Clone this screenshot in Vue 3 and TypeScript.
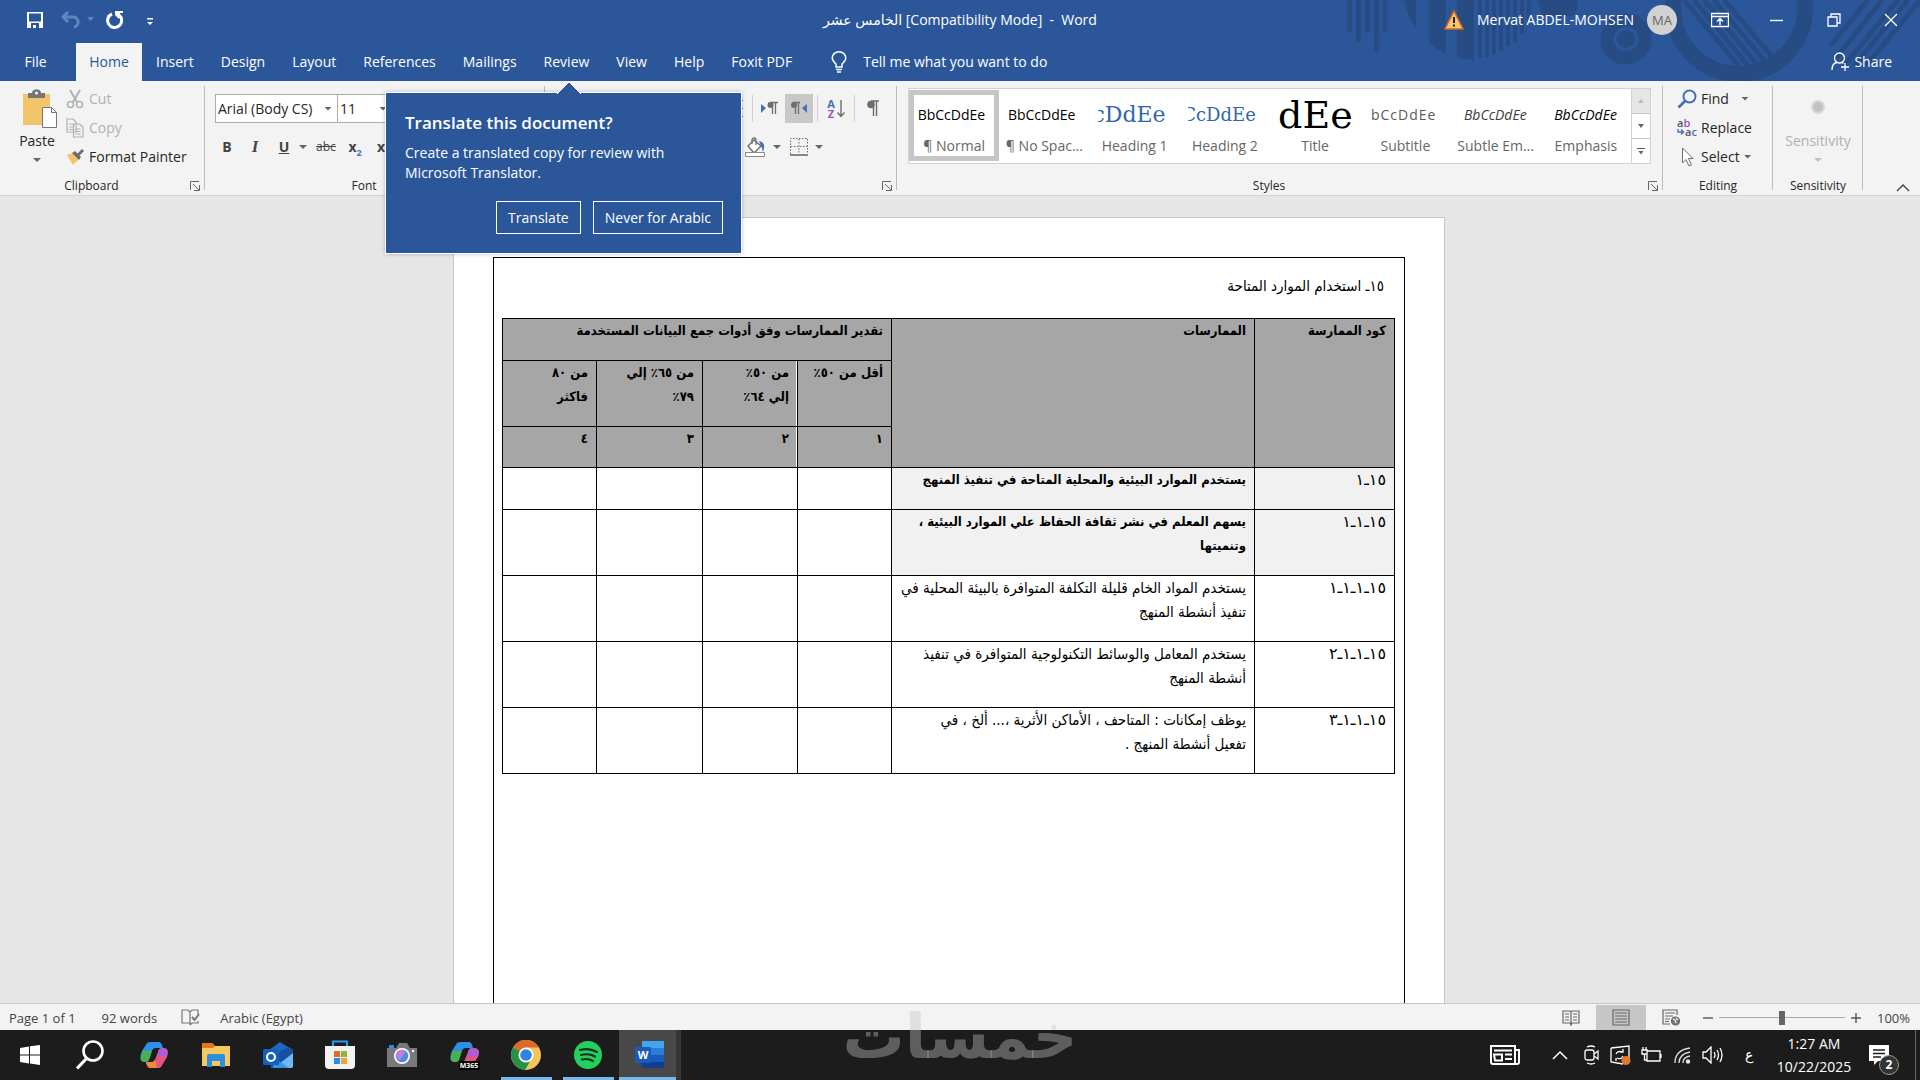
<script setup lang="ts">
import { ref } from 'vue'

interface StyleItem {
  name: string
  kind: string
  sample: string
}
interface PracticeRow {
  code: string
  text: string
  tone: string
}

const tabs: string[] = ['Insert', 'Design', 'Layout', 'References', 'Mailings', 'Review', 'View', 'Help', 'Foxit PDF']

const gallery: StyleItem[] = [
  { name: '¶ Normal', kind: 'normal', sample: 'BbCcDdEe' },
  { name: '¶ No Spac...', kind: 'normal', sample: 'BbCcDdEe' },
  { name: 'Heading 1', kind: 'h1', sample: 'cDdEe' },
  { name: 'Heading 2', kind: 'h2', sample: 'CcDdEe' },
  { name: 'Title', kind: 'title', sample: 'dEe' },
  { name: 'Subtitle', kind: 'subtitle', sample: 'bCcDdEe' },
  { name: 'Subtle Em...', kind: 'subtle', sample: 'BbCcDdEe' },
  { name: 'Emphasis', kind: 'emphasis', sample: 'BbCcDdEe' },
]

const rows: PracticeRow[] = [
  { code: '١٥ـ١', text: 'يستخدم الموارد البيئية والمحلية المتاحة في تنفيذ المنهج', tone: 'main' },
  { code: '١٥ـ١ـ١', text: 'يسهم المعلم في نشر ثقافة الحفاظ علي الموارد البيئية ،\nوتنميتها', tone: 'main' },
  { code: '١٥ـ١ـ١ـ١', text: 'يستخدم المواد الخام قليلة التكلفة المتوافرة بالبيئة المحلية في\nتنفيذ أنشطة المنهج', tone: 'plain' },
  { code: '١٥ـ١ـ١ـ٢', text: 'يستخدم المعامل والوسائط التكنولوجية المتوافرة في تنفيذ\nأنشطة المنهج', tone: 'plain' },
  { code: '١٥ـ١ـ١ـ٣', text: 'يوظف إمكانات : المتاحف ، الأماكن الأثرية ،... ألخ ، في\nتفعيل أنشطة المنهج .', tone: 'plain' },
]

const zoomLevel = ref(50)
</script>

<template>
  <div class="app">
    <header class="top">
      <svg class="deco" width="580" height="81" viewBox="1340 0 580 81" fill="#274b83" aria-hidden="true">
        <path d="M1347 0h5v32h-5zM1356 0h5v42h-5zM1365 0h5v32h-5zM1374 0h5v52h-5zM1383 0h4v32h-4zM1404 0h12v28q-9-12-12-28zM1429 0h17v54q-10-4-17-12zM1457 0h17v60q-9 0-17-3zM1478 0h4v58h-4zM1485 0h4v57h-4zM1492 0h4v55h-4zM1499 0h4v51h-4zM1506 0h4v47h-4zM1513 0h4v42h-4zM1520 0h4v34h-4zM1527 0h4v22h-4zM1538 0h40q0 12-6 16h-30z" />
        <circle cx="1626" cy="39" r="19" fill="none" stroke="#274b83" stroke-width="13" />
        <circle cx="1626" cy="39" r="9" />
        <circle cx="1739" cy="8" r="66" fill="none" stroke="#274b83" stroke-width="16" />
        <path d="M1684 0l58 70M1694 0l57 69M1704 0l55 67M1714 0l52 63M1724 0l49 58M1830 46l38-46M1836 58l46-58M1844 66l54-66M1854 66l54-66M1866 66l54-66" fill="none" stroke="#274b83" stroke-width="5" />
      </svg>
      <div class="titlebar">
        <div class="quick">
          <button aria-label="Save"><svg width="18" height="18" viewBox="0 0 18 18"><path d="M1 1h16v16H1z" fill="#fff" /><path d="M3 2.500h12v8H3zM5 12h8v5h-3v-3H7v3H5z" fill="#2b579a" /></svg></button>
          <button class="undo" aria-label="Undo"><svg width="34" height="18" viewBox="0 0 34 18"><path d="M7 1L2 6l5 5M2 6h9a5 5 0 0 1 2 10" fill="none" stroke="#6086c0" stroke-width="3" /><path d="M26 6h7l-3.500 4z" fill="#6086c0" /></svg></button>
          <button class="redo" aria-label="Repeat"><svg width="18" height="18" viewBox="0 0 18 18"><path d="M6 3A7 7 0 1 0 13 4" fill="none" stroke="#fff" stroke-width="3" /><path d="M9 0h8v2h-3l-1 6-4-4z" fill="#fff" /></svg></button>
          <button class="more" aria-label="Customize"><svg width="8" height="8" viewBox="0 0 8 8"><path d="M1 0h6v1.500H1zM1 4h6L4 7z" fill="#fff" /></svg></button>
        </div>
        <div class="doc-title" dir="ltr">الخامس عشر [Compatibility Mode]&nbsp; -&nbsp; Word</div>
        <div class="account">
          <svg width="20" height="20" viewBox="0 0 20 20"><path d="M10 1l9 18H1z" fill="#f7c873" stroke="#d9661f" stroke-width="1.500" /><path d="M9 7h2v6H9zM9 14.500h2v2H9z" fill="#222" /></svg>
          <span class="user">Mervat ABDEL-MOHSEN</span>
          <span class="avatar">MA</span>
        </div>
        <div class="winctl">
          <button aria-label="Ribbon display"><svg width="18" height="16" viewBox="0 0 18 16" fill="none" stroke="#fff"><path d="M.5 1.500h17v13H.5zM.5 4.500h17M9 13V7M6 9.500l3-3 3 3" stroke-width="1.400" /></svg></button>
          <button aria-label="Minimize"><svg width="14" height="14" viewBox="0 0 14 14"><path d="M0 7.500h13" stroke="#fff" stroke-width="1.400" /></svg></button>
          <button aria-label="Restore"><svg width="14" height="14" viewBox="0 0 14 14" fill="none" stroke="#fff" stroke-width="1.300"><path d="M1 4h9v9H1zM4 4V1h9v9h-3" /></svg></button>
          <button aria-label="Close"><svg width="14" height="14" viewBox="0 0 14 14"><path d="M1 1l12 12M13 1L1 13" stroke="#fff" stroke-width="1.400" /></svg></button>
        </div>
      </div>
      <nav class="tabs">
        <button class="tab file">File</button>
        <button class="tab active">Home</button>
        <button v-for="t in tabs" :key="t" class="tab">{{ t }}</button>
        <button class="tell">
          <svg width="16" height="22" viewBox="0 0 16 22" fill="none" stroke="#fff" stroke-width="1.500"><path d="M5 16v-3C3 11 1.200 9.500 1.200 7a6.800 6.200 0 0 1 13.600 0c0 2.500-1.800 4-3.800 6v3zM5 18.500h6M6 21h4" /></svg>
          Tell me what you want to do
        </button>
        <button class="share">
          <svg width="19" height="20" viewBox="0 0 19 20" fill="none" stroke="#fff" stroke-width="1.300"><circle cx="8.500" cy="6" r="5" /><path d="M1 18c0-4 2-7 5-7.500M11 10.500l1.500 1M14 11v8M10 15h8" /></svg>
          Share
        </button>
      </nav>
    </header>

    <section class="ribbon">
      <div class="group clipboard">
        <div class="body">
          <button class="paste">
            <svg width="36" height="40" viewBox="0 0 36 40"><path d="M1 5h27v31H1z" fill="#f2c56b" /><path d="M6 9V4h4c0-5 9-5 9 0h4v5z" fill="#767676" /><circle cx="14.500" cy="4" r="1.600" fill="#f3f3f3" /><path d="M20.500 18.500h9l5 5v15h-14z" fill="#fff" stroke="#767676" /><path d="M29.500 18.500v5h5" fill="none" stroke="#767676" /></svg>
            <span>Paste</span>
            <i class="caret"></i>
          </button>
          <div class="stack">
            <button class="line off"><svg width="18" height="20" viewBox="0 0 18 20" fill="none" stroke="#b1b1b1" stroke-width="1.600"><path d="M4 1l7 12M14 1L7 13" stroke-width="2" /><circle cx="4.500" cy="15.500" r="3" /><circle cx="13.500" cy="15.500" r="3" /></svg>Cut</button>
            <button class="line off"><svg width="18" height="20" viewBox="0 0 18 20" fill="#f3f3f3" stroke="#b1b1b1" stroke-width="1.200"><path d="M1 1h6l3 3v10H1zM3 6h4M3 9h4M3 11.500h4M7.500 6h6l3.500 3v10H7.500zM9.500 11h5M9.500 13.500h5M9.500 16h5" /></svg>Copy</button>
            <button class="line"><svg width="18" height="16" viewBox="0 0 18 16"><path d="M1 6l6-2 6 6-6 6z" fill="#f2c56b" /><path d="M6 4l3-2 6 6-2 3z" fill="#6d6d6d" /><path d="M11 5l5-5 2 2-5 5z" fill="#6d6d6d" /></svg>Format Painter</button>
          </div>
        </div>
        <div class="label launch"><span>Clipboard</span><svg class="corner" width="10" height="10" viewBox="0 0 10 10" fill="none" stroke="#666"><path d="M.5 9V.5H9M3 3l6 6M9.500 4v5.500H4" /></svg></div>
      </div>

      <div class="group font">
        <div class="body col">
          <div class="frow">
            <div class="combo family"><select aria-label="Font"><option>Arial (Body CS)</option></select><i class="caret"></i></div>
            <div class="combo size"><select aria-label="Font size"><option>11</option></select><i class="caret"></i></div>
          </div>
          <div class="fmt">
            <button class="b">B</button>
            <button class="i">I</button>
            <button class="u">U</button>
            <i class="caret"></i>
            <button class="s">abc</button>
            <button class="x">x<sub>2</sub></button>
            <button class="x" aria-label="Superscript">x</button>
          </div>
        </div>
        <div class="label launch"><span>Font</span></div>
      </div>

      <div class="group para">
        <div class="body col">
          <div class="prow">
            <span class="bit"></span>
            <span class="vsep"></span>
            <button class="picon" aria-label="Left to right"><svg width="17" height="16" viewBox="0 0 17 16"><path d="M0 3l5 4-5 5z" fill="#4472b0" /><path d="M9 1.500h8M11.500 1v12M14.500 1v12" stroke="#6d6d6d" stroke-width="1.300" /><circle cx="9.500" cy="4" r="3" fill="#6d6d6d" /></svg></button>
            <button class="picon on" aria-label="Right to left"><svg width="17" height="16" viewBox="0 0 17 16"><path d="M16 3l-5 4 5 5z" fill="#4472b0" /><path d="M2 1.500h7M4.500 1v12M7.500 1v12" stroke="#6d6d6d" stroke-width="1.300" /><circle cx="3" cy="4" r="3" fill="#6d6d6d" /></svg></button>
            <span class="vsep"></span>
            <button class="picon wide sort" aria-label="Sort"><span class="az"><b>A</b><b>Z</b></span><svg width="8" height="18" viewBox="0 0 8 18" fill="none" stroke="#6d6d6d" stroke-width="1.400"><path d="M4 0v16M.5 12.500L4 16.500l3.500-4" /></svg></button>
            <span class="vsep"></span>
            <button class="picon wide" aria-label="Show marks"><svg width="12" height="17" viewBox="0 0 12 17"><path d="M4 1h8M6.500 1v15M9.500 1v15" stroke="#6d6d6d" stroke-width="1.400" /><circle cx="4" cy="4.500" r="3.800" fill="#6d6d6d" /></svg></button>
          </div>
          <div class="prow second">
            <button aria-label="Shading"><svg width="21" height="20" viewBox="0 0 21 20"><path d="M9 3l7 6-7 7-6-7z" fill="#fff" stroke="#6d6d6d" stroke-width="1.400" /><path d="M7 7V3a2 2 0 0 1 4 0v5" fill="none" stroke="#6d6d6d" stroke-width="1.300" /><path d="M14 4c6 1 6 6 4 11-1-3-1-5-2-6z" fill="#4472b0" /><path d="M.5 15.500h19v4H.5z" fill="#fff" stroke="#8a8a8a" /></svg></button>
            <i class="caret"></i>
            <button class="borders" aria-label="Borders"><svg width="18" height="18" viewBox="0 0 18 18" fill="none" stroke="#6d6d6d"><path d="M.5 16V.5h17V16M9 1v15M1 8.500h16" stroke-dasharray="1.500 1.500" /><path d="M0 17h18" stroke-width="1.600" /></svg></button>
            <i class="caret"></i>
          </div>
        </div>
        <div class="label launch"><span></span><svg class="corner" width="10" height="10" viewBox="0 0 10 10" fill="none" stroke="#666"><path d="M.5 9V.5H9M3 3l6 6M9.500 4v5.500H4" /></svg></div>
      </div>

      <div class="group styles">
        <div class="body">
          <div class="gallery">
            <button v-for="(s, n) in gallery" :key="s.name" class="style" :class="{ sel: n === 0 }">
              <span class="sample" :class="s.kind"><span>{{ s.sample }}</span></span>
              <span class="sname">{{ s.name }}</span>
            </button>
            <div class="scroll">
              <button class="dim" aria-label="Up"><i class="caret up"></i></button>
              <button aria-label="Down"><i class="caret"></i></button>
              <button aria-label="More styles"><i class="bar"></i><i class="caret"></i></button>
            </div>
          </div>
        </div>
        <div class="label launch"><span>Styles</span><svg class="corner" width="10" height="10" viewBox="0 0 10 10" fill="none" stroke="#666"><path d="M.5 9V.5H9M3 3l6 6M9.500 4v5.500H4" /></svg></div>
      </div>

      <div class="group editing">
        <div class="body">
          <div class="stack">
            <button class="line"><svg width="20" height="20" viewBox="0 0 20 20" fill="none" stroke="#4472b0"><circle cx="12.500" cy="7.500" r="6" stroke-width="2" /><path d="M8 12l-6.500 6.500" stroke-width="2.600" /></svg>Find<i class="caret far"></i></button>
            <button class="line"><svg width="20" height="20" viewBox="0 0 20 20"><text x="0" y="9" font-size="11" font-weight="600" fill="#555">a<tspan fill="#9b4fc0">b</tspan></text><text x="8" y="18" font-size="11" font-weight="600" fill="#555">a<tspan fill="#4472b0">c</tspan></text><path d="M1 11v3h5M4 11.500L6.500 14 4 16.500" fill="none" stroke="#4472b0" stroke-width="1.400" /></svg>Replace</button>
            <button class="line"><svg width="20" height="20" viewBox="0 0 20 20"><path d="M5.500 1v15l3.500-3.500 3 6.500 2.500-1-3-6.500h4.500z" fill="#fff" stroke="#6d6d6d" /></svg>Select<i class="caret near"></i></button>
          </div>
        </div>
        <div class="label"><span>Editing</span></div>
      </div>

      <div class="group sens">
        <div class="body">
          <button class="paste off"><svg width="36" height="40" viewBox="0 0 36 40"><circle cx="18" cy="18" r="7" fill="#d8d8d8" /><circle cx="18" cy="18" r="5" fill="#c2c2c2" /></svg><span>Sensitivity</span><i class="caret"></i></button>
        </div>
        <div class="label"><span>Sensitivity</span></div>
      </div>
      <div class="collapse"><button aria-label="Collapse ribbon"><svg width="14" height="9" viewBox="0 0 14 9"><path d="M1 8l6-6 6 6" fill="none" stroke="#444" stroke-width="1.400" /></svg></button></div>
    </section>

    <aside class="tip">
      <svg class="beak" width="24" height="13" viewBox="0 0 24 13"><path d="M0 13L12 1l12 12" fill="#2b579a" stroke="#fff" /></svg>
      <h2>Translate this document?</h2>
      <p>Create a translated copy for review with Microsoft Translator.</p>
      <div class="tip-actions">
        <button>Translate</button>
        <button>Never for Arabic</button>
      </div>
    </aside>

    <main class="desk">
      <article class="page">
        <div class="frame" dir="rtl" lang="ar">
          <p class="heading">١٥ـ استخدام الموارد المتاحة</p>
          <table>
            <colgroup><col class="c-code"><col class="c-text"><col class="c-1"><col class="c-2"><col class="c-3"><col class="c-4"></colgroup>
            <thead>
              <tr><th rowspan="3">كود الممارسة</th><th rowspan="3">الممارسات</th><th colspan="4">تقدير الممارسات وفق أدوات جمع البيانات المستخدمة</th></tr>
              <tr><th>أقل من ٥٠٪</th><th class="lit">من ٥٠٪<br>إلي ٦٤٪</th><th>من ٦٥٪ إلي<br>٧٩٪</th><th>من ٨٠<br>فاكثر</th></tr>
              <tr class="nums"><th>١</th><th class="lit">٢</th><th>٣</th><th>٤</th></tr>
            </thead>
            <tbody>
              <tr v-for="r in rows" :key="r.code" :class="r.tone">
                <td class="code">{{ r.code }}</td><td class="text">{{ r.text }}</td><td></td><td></td><td></td><td></td>
              </tr>
            </tbody>
          </table>
        </div>
      </article>
    </main>

    <footer class="status">
      <span>Page 1 of 1</span>
      <span class="words">92 words</span>
      <svg class="proof" width="19" height="17" viewBox="0 0 19 17" fill="none" stroke="#777" stroke-width="1.200"><path d="M9 14H1V1h6l2 2v13M9 3l2-2h6v4M17 12v2h-6l-2 2" /><path d="M11 8l2.500 3L18 5" stroke-width="2" /></svg>
      <span>Arabic (Egypt)</span>
      <div class="views">
        <button aria-label="Read mode"><svg width="18" height="16" viewBox="0 0 18 16" fill="none" stroke="#666" stroke-width="1.200"><path d="M9 15V2L8 1H1v12h7l1 2 1-2h7V1h-7L9 2M3 4h4M3 7h4M3 10h4M11 4h4M11 7h4M11 10h4" /></svg></button>
        <button class="on" aria-label="Print layout"><svg width="18" height="17" viewBox="0 0 18 17" fill="none" stroke="#666" stroke-width="1.200"><path d="M1 1h16v15H1zM3 4h12M3 7h12M3 10h12M3 13h12" /></svg></button>
        <button aria-label="Web layout"><svg width="18" height="17" viewBox="0 0 18 17" fill="none" stroke="#666" stroke-width="1.200"><path d="M15 6V1H1v14h7M3 4h10M3 7h8M3 10h5M3 12.500h4" /><circle cx="13.500" cy="12" r="4" fill="#777" /><path d="M11 10l2 1 1 3M14 9l2 2" stroke="#f3f3f3" /></svg></button>
      </div>
      <div class="zoom">
        <button aria-label="Zoom out"><svg width="10" height="10" viewBox="0 0 10 10"><path d="M0 5h10" stroke="#555" stroke-width="1.400" /></svg></button>
        <input v-model="zoomLevel" type="range" min="0" max="100" aria-label="Zoom">
        <button aria-label="Zoom in"><svg width="10" height="10" viewBox="0 0 10 10"><path d="M0 5h10M5 0v10" stroke="#555" stroke-width="1.400" /></svg></button>
      </div>
      <span class="pct">100%</span>
    </footer>

    <div class="taskbar">
      <button class="app-btn start" aria-label="Start"><svg width="20" height="20" viewBox="0 0 20 20" fill="#fff"><path d="M0 3l9-1.500V9.500H0zM10 1.300L20 0v9.500H10zM0 10.500h9v8L0 17zM10 10.500h10V20l-10-1.400z" /></svg></button>
      <button class="app-btn find" aria-label="Search"><svg width="28" height="30" viewBox="0 0 28 30" fill="none" stroke="#fff"><circle cx="17" cy="11" r="9.500" stroke-width="2.600" /><path d="M10.500 18.500L1 28.500" stroke-width="3.200" /></svg></button>
      <button class="app-btn" aria-label="Copilot">
        <svg width="30" height="28" viewBox="0 0 30 28"><path d="M8 2c1-1 3-1 5-1h7c2 0 3 2 4 6h-7c-3 0-4 2-5 5l-2 6c-1 3-3 3-5 3C0 20 1 15 3 10z" fill="#2f8fe8" /><path d="M4 10h9l-3 9c-1 2-3 2-5 2-4-1-4-5-1-11z" fill="#49b24b" /><path d="M22 26c-1 1-2 1-4 1h-6c-3 0-4-2-5-6h5c3 0 4-1 5-5l2-5c1-4 3-4 5-4 6 0 5 5 4 9z" fill="#e9547f" /><path d="M19 11c1-3 2-4 5-4 5 0 5 4 4 8l-9 1z" fill="#b15bd6" /><path d="M7 21h5c2 0 3 0 4-3l2 9h-6c-3 0-4-2-5-6z" fill="#f08a3c" /></svg>
      </button>
      <button class="app-btn" aria-label="File Explorer"><svg width="28" height="24" viewBox="0 0 28 24"><path d="M0 0h10l3 3h15v20H0z" fill="#f6c960" /><path d="M0 0h10l3 3-2 2H0z" fill="#df7a1f" /><path d="M5 24V13q0-2 2-2h14q2 0 2 2v11h-5v-6h-8v6z" fill="#2c8ee0" /></svg></button>
      <button class="app-btn" aria-label="Outlook"><svg width="31" height="27" viewBox="0 0 31 27"><path d="M6 8L17 0l13 8v16q0 2-2 2H8z" fill="#1b69c4" /><path d="M8 14L26 5l4 3v4L13 25H8z" fill="#184f9f" /><path d="M30 11v13q0 2-2 2H11z" fill="#6db9f4" /><path d="M10 15l16 11H10z" fill="#3794e4" /><rect y="7" width="16" height="16" rx="1.500" fill="#0f62c0" /><circle cx="8" cy="15" r="4" fill="none" stroke="#fff" stroke-width="2.200" /></svg></button>
      <button class="app-btn" aria-label="Store"><svg width="30" height="30" viewBox="0 0 30 30"><path d="M8 7V1.500h14V7" fill="none" stroke="#2c9be8" stroke-width="2.200" /><path d="M0 6h30v19q0 4-4 4H4q-4 0-4-4z" fill="#f2f2f2" /><path d="M9 11h6v6H9z" fill="#de6a24" /><path d="M16 11h6v6h-6z" fill="#8fb33b" /><path d="M9 18h6v6H9z" fill="#2c8ee0" /><path d="M16 18h6v6h-6z" fill="#f0a13a" /></svg></button>
      <button class="app-btn" aria-label="Camera"><svg width="30" height="26" viewBox="0 0 30 26"><path d="M2 3h5v3H2z" fill="#2c8ee0" /><path d="M0 6h9l3-5h8l3 5h7v19H0z" fill="#77797c" /><circle cx="15" cy="14" r="8" fill="#fff" /><circle cx="15" cy="14" r="6.300" fill="#4c8fd8" /><path d="M9 13a6 6 0 0 1 10-4l-7 10z" fill="#c080d8" /><circle cx="26" cy="9" r="1.200" fill="#fff" /></svg></button>
      <button class="app-btn" aria-label="Microsoft 365">
        <svg width="31" height="29" viewBox="0 0 31 29"><path d="M8 2c1-1 3-1 5-1h7c2 0 3 2 4 6h-7c-3 0-4 2-5 5l-2 6c-1 3-3 3-5 3C0 20 1 15 3 10z" fill="#2f8fe8" /><path d="M4 10h9l-3 9c-1 2-3 2-5 2-4-1-4-5-1-11z" fill="#49b24b" /><path d="M22 26c-1 1-2 1-4 1h-6l5-11 2-5c1-4 3-4 5-4 7 0 7 5 5 9z" fill="#e9547f" /><path d="M19 11c1-3 2-4 5-4 6 0 6 4 5 8l-10 1z" fill="#b15bd6" /><rect x="10" y="20" width="21" height="9" rx="1.500" fill="#000" /><text x="20" y="27" font-size="7" font-weight="700" text-anchor="middle" fill="#fff">M365</text></svg>
      </button>
      <button class="app-btn open" aria-label="Chrome"><svg width="30" height="30" viewBox="0 0 30 30"><circle cx="15" cy="15" r="15" fill="#f3c55b" /><path d="M15 15L2 7.500A15 15 0 0 1 28 7.500H15z" fill="#dc6b2a" /><path d="M2 7.500A15 15 0 0 0 14 30l7-12-6-3z" fill="#279247" /><circle cx="15" cy="15" r="7.500" fill="#fff" /><circle cx="15" cy="15" r="5.800" fill="#2f82e0" /></svg></button>
      <button class="app-btn open" aria-label="Spotify"><svg width="28" height="28" viewBox="0 0 28 28"><circle cx="14" cy="14" r="14" fill="#23cf5f" /><path d="M6 9q9-2.500 17 2M7 14q8-2 14 1.500M8 18.500q6-1.500 11 1.500" fill="none" stroke="#14311f" stroke-width="2.200" stroke-linecap="round" /></svg></button>
      <button class="app-btn open current" aria-label="Word"><svg width="30" height="28" viewBox="0 0 30 28"><path d="M7 0h22v8H7z" fill="#41a5ee" /><path d="M7 7h22v7H7z" fill="#2b7cd3" /><path d="M7 14h22v7H7z" fill="#185abd" /><path d="M7 21h22v6H7z" fill="#103f91" /><rect y="6" width="16" height="16" rx="1.500" fill="#185abd" /><text x="8" y="18" font-size="11" font-weight="700" text-anchor="middle" fill="#fff">W</text></svg></button>
      <div class="tray">
        <svg class="news" width="30" height="20" viewBox="0 0 30 20" fill="none" stroke="#fff" stroke-width="2"><path d="M1 1h24v18H3q-2 0-2-2zM25 5h4v12q0 2-2 2h-3M4 5.500h18M4 9.500h8v6H5zM15 9.500h7M15 14h7" /></svg>
        <svg width="16" height="10" viewBox="0 0 16 10" fill="none" stroke="#fff" stroke-width="1.500"><path d="M1 9l7-7 7 7" /></svg>
        <svg class="meet" width="15" height="20" viewBox="0 0 15 20" fill="none" stroke="#fff" stroke-width="1.300"><rect x="1" y="5" width="9" height="10" rx="2" /><path d="M10 9l4-3v8l-4-3M3 2q4-2 8 0M3 18q4 2 8 0" /></svg>
        <svg class="sync" width="21" height="20" viewBox="0 0 21 20" fill="none" stroke="#fff" stroke-width="1.300"><path d="M1 3l18-2v14M1 3v14l12 2M6 9q2-4 7-2M13 4v3h-3M13 11q-2 4-6 2M6 16v-3" /><circle cx="16" cy="15.500" r="4.500" fill="#e07a2c" stroke="none" /></svg>
        <svg class="batt" width="21" height="16" viewBox="0 0 21 16" fill="none" stroke="#fff" stroke-width="1.300"><path d="M6 4h13v10H6zM20 7v4M1 3h5v4H1zM2 0v3M5 0v3M3.500 7v6H6" /></svg>
        <svg class="wifi" width="17" height="17" viewBox="0 0 17 17" fill="none" stroke="#ddd" stroke-width="1.300"><path d="M1 16Q1 3 16 1M5 16Q5 7 16 5M9 16q0-6 7-7" /><circle cx="14" cy="14.500" r="1.600" fill="#fff" /></svg>
        <svg class="vol" width="21" height="18" viewBox="0 0 21 18" fill="none" stroke="#fff" stroke-width="1.300"><path d="M1 6h3l5-5v16l-5-5H1zM12 6q2 3 0 6M15 4q3 5 0 10M18 2q4 7 0 14" /></svg>
        <span class="lang" lang="ar">ع</span>
        <div class="clock"><span>1:27 AM</span><span>10/22/2025</span></div>
        <div class="notes"><svg width="20" height="20" viewBox="0 0 20 20"><path d="M0 0h20v16H9l-4 4v-4H0z" fill="#fff" /><path d="M4 5h12M4 8.500h12M4 12h8" stroke="#1c1c1c" stroke-width="1.300" /></svg><b>2</b></div>
        <span class="edge"></span>
      </div>
    </div>
    <div class="mark" lang="ar">خمسات</div>
  </div>
</template>

<style>
body {
  background: #e6e6e6;
}
</style>

<style scoped>
* {
  box-sizing: border-box;
}
.app {
  position: relative;
  display: flex;
  flex-direction: column;
  height: 100vh;
  overflow: hidden;
  font-family: "Open Sans", "DejaVu Sans", sans-serif;
  font-size: 14px;
  line-height: 20px;
  color: #262626;
}
button {
  display: flex;
  align-items: center;
  justify-content: center;
  margin: 0;
  padding: 0;
  border: 0;
  background: none;
  color: inherit;
  font: inherit;
  white-space: nowrap;
}
svg {
  display: block;
  flex: none;
}
.top {
  position: relative;
  background: #2b579a;
  color: #fff;
}
.deco {
  position: absolute;
  top: 0;
  right: 0;
}
.titlebar {
  position: relative;
  display: flex;
  align-items: center;
  height: 40px;
}
.quick {
  display: flex;
  flex: 1;
  align-items: center;
  padding-left: 26px;
}
.undo {
  margin-left: 17px;
}
.redo {
  margin-left: 11px;
}
.more {
  margin: 4px 0 0 22px;
}
.account {
  display: flex;
  align-items: center;
  gap: 13px;
}
.doc-title {
  position: absolute;
  left: 50%;
  transform: translateX(-50%);
  white-space: nowrap;
}
.avatar {
  display: flex;
  align-items: center;
  justify-content: center;
  width: 30px;
  height: 30px;
  border-radius: 50%;
  background: #d2d2d2;
  color: #666;
  font-size: 13px;
}
.winctl {
  display: flex;
  margin: 0 1px 0 14px;
}
.winctl button {
  width: 57px;
  height: 38px;
}
.tabs {
  position: relative;
  display: flex;
  gap: 1px;
  height: 41px;
  padding: 3px 28px 0 0;
}
.tab {
  padding: 0 13px;
}
.tab.file {
  width: 75px;
  padding: 0 4px 0 0;
}
.tab.active {
  width: 66px;
  background: #f3f3f3;
  color: #2b579a;
}
.tell {
  gap: 16px;
  margin-left: 25px;
}
.share {
  gap: 4px;
  margin-left: auto;
}
.ribbon {
  display: flex;
  height: 115px;
  border-bottom: 1px solid #d2d2d2;
  background: #f3f3f3;
}
.group {
  position: relative;
  display: flex;
  flex: none;
  flex-direction: column;
}
.group::after {
  content: "";
  position: absolute;
  top: 5px;
  right: 0;
  bottom: 5px;
  width: 1px;
  background: #bdbdbd;
}
.body {
  display: flex;
  height: 95px;
  padding-top: 3px;
}
.body.col {
  flex-direction: column;
  padding-top: 13px;
}
.label {
  display: flex;
  align-items: center;
  height: 19px;
  font-size: 12px;
}
.label span {
  flex: 1;
  text-align: center;
}
.label.launch {
  padding-right: 22px;
}
.corner {
  position: absolute;
  right: 5px;
}
.clipboard {
  width: 205px;
}
.font {
  width: 340px;
}
.para {
  width: 352px;
}
.styles {
  flex: 1;
  min-width: 0;
}
.editing {
  width: 110px;
}
.sens {
  width: 90px;
}
.collapse {
  display: flex;
  align-items: flex-end;
  justify-content: flex-end;
  width: 57px;
  padding: 0 10px 3px 0;
}
.caret {
  flex: none;
  width: 8px;
  height: 4px;
  background: #666;
  clip-path: polygon(0 0, 100% 0, 50% 100%);
}
.caret.up {
  background: #bbb;
  clip-path: polygon(0 100%, 100% 100%, 50% 0);
}
.caret.far {
  margin-left: 8px;
}
.caret.near {
  margin-left: 0;
}
.paste {
  flex-direction: column;
  justify-content: flex-start;
  width: 58px;
  height: 80px;
  margin-left: 8px;
  padding-top: 5px;
}
.paste span {
  margin: 2px 0 7px;
}
.clipboard .paste svg {
  margin-left: 6px;
}
.sens .paste {
  width: 100%;
  margin: 0;
}
.off {
  color: #b1b1b1;
}
.off .caret {
  background: #c2c2c2;
}
.stack {
  display: flex;
  flex-direction: column;
}
.line {
  justify-content: flex-start;
  gap: 5px;
  height: 29px;
}
.editing .stack {
  padding-left: 14px;
}
.editing .line {
  gap: 4px;
}
.frow {
  display: flex;
  padding-left: 10px;
}
.combo {
  position: relative;
  display: flex;
  align-items: center;
  height: 29px;
  border: 1px solid #ababab;
  background: #fff;
}
.combo + .combo {
  border-left: 0;
}
.family {
  width: 123px;
}
.size {
  width: 55px;
}
.combo select {
  width: 100%;
  height: 100%;
  padding: 0 2px;
  border: 0;
  appearance: none;
  background: none;
  color: #262626;
  font: inherit;
}
.combo .caret {
  position: absolute;
  right: 5px;
}
.fmt {
  display: flex;
  align-items: center;
  height: 48px;
  padding-left: 8px;
  color: #444;
  font-weight: 700;
}
.fmt button {
  width: 28px;
}
.fmt .i {
  font-family: "Liberation Serif", serif;
  font-size: 17px;
  font-style: italic;
}
.fmt .u {
  width: 30px;
  text-decoration: underline;
}
.fmt .s {
  width: 38px;
  font-size: 12px;
  font-weight: 400;
  text-decoration: line-through;
}
.fmt .x {
  width: 20px;
  margin-right: 6px;
}
.fmt sub {
  align-self: flex-end;
  color: #4472b0;
  font-size: 9px;
  line-height: 9px;
}
.prow {
  display: flex;
  align-items: center;
  height: 29px;
  padding-left: 195px;
}
.bit {
  width: 3px;
  height: 18px;
  margin-right: 9px;
  background: repeating-linear-gradient(#4472b0 0 1px, transparent 1px 8px);
}
.vsep {
  width: 1px;
  height: 27px;
  background: #d2d2d2;
}
.picon {
  width: 32px;
  height: 29px;
}
.picon.on {
  width: 28px;
  margin-right: 4px;
  background: #c8c8c8;
}
.picon.wide {
  width: 36px;
}
.sort {
  gap: 2px;
}
.az {
  display: flex;
  flex-direction: column;
  color: #4472b0;
  font-size: 11px;
  line-height: 10px;
}
.az b + b {
  color: #9b4fc0;
}
.prow.second {
  height: 48px;
  padding-left: 200px;
}
.prow .caret {
  margin-left: 7px;
}
.borders {
  margin-left: 9px;
}
.styles .body {
  padding: 7px 12px 0 11px;
}
.gallery {
  display: flex;
  width: 100%;
  height: 76px;
  border: 1px solid #d2d2d2;
  background: #fff;
}
.style {
  flex: 1 1 80px;
  flex-direction: column;
  justify-content: flex-start;
  min-width: 0;
  margin: 1px 0 2px;
  padding-top: 8px;
  overflow: hidden;
}
.style.sel {
  padding-top: 3px;
  border: 5px solid #c6c6c6;
}
.sample {
  display: flex;
  align-items: center;
  justify-content: flex-end;
  width: 68px;
  height: 34px;
  margin-right: 6px;
  overflow: hidden;
  color: #000;
}
.sname {
  margin-top: 4px;
  color: #666;
}
.h1,
.h2 {
  color: #2f68a8;
  font-family: "DejaVu Serif", serif;
  font-size: 22px;
}
.h2 {
  font-size: 18px;
}
.sample.title {
  width: 75px;
  margin-right: 0;
  font-family: "DejaVu Serif", serif;
  font-size: 38px;
}
.subtitle {
  color: #5a5a5a;
  letter-spacing: 1px;
}
.subtle {
  color: #404040;
  font-style: italic;
}
.emphasis {
  font-style: italic;
}
.scroll {
  display: flex;
  flex: none;
  flex-direction: column;
  width: 19px;
}
.scroll button {
  flex: 1;
  flex-direction: column;
  gap: 2px;
  border-left: 1px solid #d2d2d2;
}
.scroll button + button {
  border-top: 1px solid #c6c6c6;
}
.scroll .dim {
  background: #e6e6e6;
}
.scroll .caret {
  width: 6px;
}
.bar {
  width: 8px;
  height: 1px;
  background: #555;
}
.tip {
  position: absolute;
  top: 92px;
  left: 385px;
  z-index: 2;
  width: 357px;
  height: 162px;
  padding: 19px 18px 0 19px;
  border: 1px solid #fff;
  background: #2b579a;
  box-shadow: 0 0 4px rgba(0, 0, 0, 0.25);
  color: #fff;
}
.beak {
  position: absolute;
  top: -12px;
  left: 171px;
}
.tip h2 {
  margin: 0;
  font-size: 17px;
  font-weight: 600;
  line-height: 22px;
}
.tip p {
  margin: 9px 0 18px;
}
.tip-actions {
  display: flex;
  justify-content: flex-end;
  gap: 12px;
}
.tip-actions button {
  height: 33px;
  padding: 0 11px;
  border: 1px solid #fff;
}
.desk {
  display: flex;
  flex: 1;
  justify-content: center;
  min-height: 0;
  padding: 21px 22px 0 0;
  overflow: hidden;
  background: #e6e6e6;
}
.page {
  display: flex;
  width: 992px;
  max-width: 100%;
  padding: 39px 39px 0;
  border: 1px solid #c6c6c6;
  border-bottom: 0;
  background: #fff;
}
.frame {
  width: 100%;
  padding: 16px 9px 0 8px;
  border: 1px solid #000;
  border-bottom: 0;
  color: #000;
  font-family: "DejaVu Sans Condensed", "DejaVu Sans", sans-serif;
  font-size: 15px;
  line-height: 24px;
}
.heading {
  margin: 0 11px 20px;
}
table {
  width: 100%;
  border-collapse: collapse;
  table-layout: fixed;
}
.c-code {
  width: 140px;
}
.c-1,
.c-4 {
  width: 94px;
}
.c-2 {
  width: 95px;
}
.c-3 {
  width: 106px;
}
th,
td {
  height: 42px;
  padding: 0 8px 17px 0;
  border: 1px solid #000;
  text-align: right;
  vertical-align: top;
  white-space: pre;
}
th {
  background: #a6a6a6;
  font-size: 13px;
}
.nums th {
  height: 41px;
  padding-bottom: 16px;
}
.lit {
  box-shadow: inset -1px 0 #fff;
}
.code {
  font-family: "DejaVu Sans", sans-serif;
  font-size: 16px;
}
.main .code,
.main .text {
  background: #f1f1f1;
}
.main .text {
  font-size: 13px;
  font-weight: 700;
}
.status {
  display: flex;
  align-items: center;
  height: 27px;
  padding: 1px 10px 0 9px;
  border-top: 1px solid #c6c6c6;
  background: #f3f3f3;
  color: #444;
  font-size: 13px;
}
.words {
  margin-left: 26px;
}
.proof {
  margin: 0 20px 0 24px;
}
.views {
  display: flex;
  align-self: stretch;
  margin-left: auto;
}
.views button {
  width: 50px;
}
.views .on {
  background: #c6c6c6;
}
.zoom {
  display: flex;
  align-items: center;
  gap: 6px;
  margin: 0 16px 0 7px;
}
.zoom input {
  width: 126px;
  height: 15px;
  margin: 0;
  appearance: none;
  background: linear-gradient(#ababab, #ababab) center / 100% 1px no-repeat;
}
.zoom input::-webkit-slider-thumb {
  width: 6px;
  height: 14px;
  appearance: none;
  background: #666;
}
.taskbar {
  display: flex;
  height: 50px;
  background: #1c1c1c;
  color: #fff;
}
.app-btn {
  position: relative;
  width: 62px;
}
.start {
  width: 60px;
}
.find {
  width: 60px;
  margin-right: 3px;
}
.open::after {
  content: "";
  position: absolute;
  right: 5px;
  bottom: 0;
  left: 6px;
  height: 3px;
  background: #76b9ed;
}
.current {
  padding-left: 4px;
  border-right: 5px solid #363636;
  background: #484848;
}
.current::after {
  right: 0;
  left: 0;
}
.tray {
  display: flex;
  align-items: center;
  margin-left: auto;
}
.news {
  margin-right: 32px;
}
.meet {
  margin-left: 16px;
}
.sync {
  margin-left: 11px;
}
.batt {
  margin-left: 10px;
}
.wifi {
  margin-left: 12px;
}
.vol {
  margin-left: 11px;
}
.lang {
  width: 10px;
  margin-left: 22px;
  font-family: "DejaVu Sans", sans-serif;
}
.clock {
  display: flex;
  flex-direction: column;
  align-items: center;
  width: 78px;
  margin-left: 20px;
  line-height: 23px;
}
.notes {
  position: relative;
  width: 30px;
  height: 20px;
  margin: 0 16px;
}
.notes b {
  position: absolute;
  top: 10px;
  left: 10px;
  width: 20px;
  height: 20px;
  border: 1px solid #999;
  border-radius: 50%;
  background: #333;
  font-size: 12px;
  line-height: 18px;
  text-align: center;
}
.edge {
  width: 5px;
  height: 50px;
  border-left: 1px solid #666;
}
.mark {
  position: absolute;
  right: 0;
  bottom: 12px;
  left: 0;
  color: rgba(192, 195, 200, 0.4);
  font-family: "DejaVu Sans", sans-serif;
  font-size: 62px;
  font-weight: 700;
  line-height: 62px;
  text-align: center;
  pointer-events: none;
}
</style>
